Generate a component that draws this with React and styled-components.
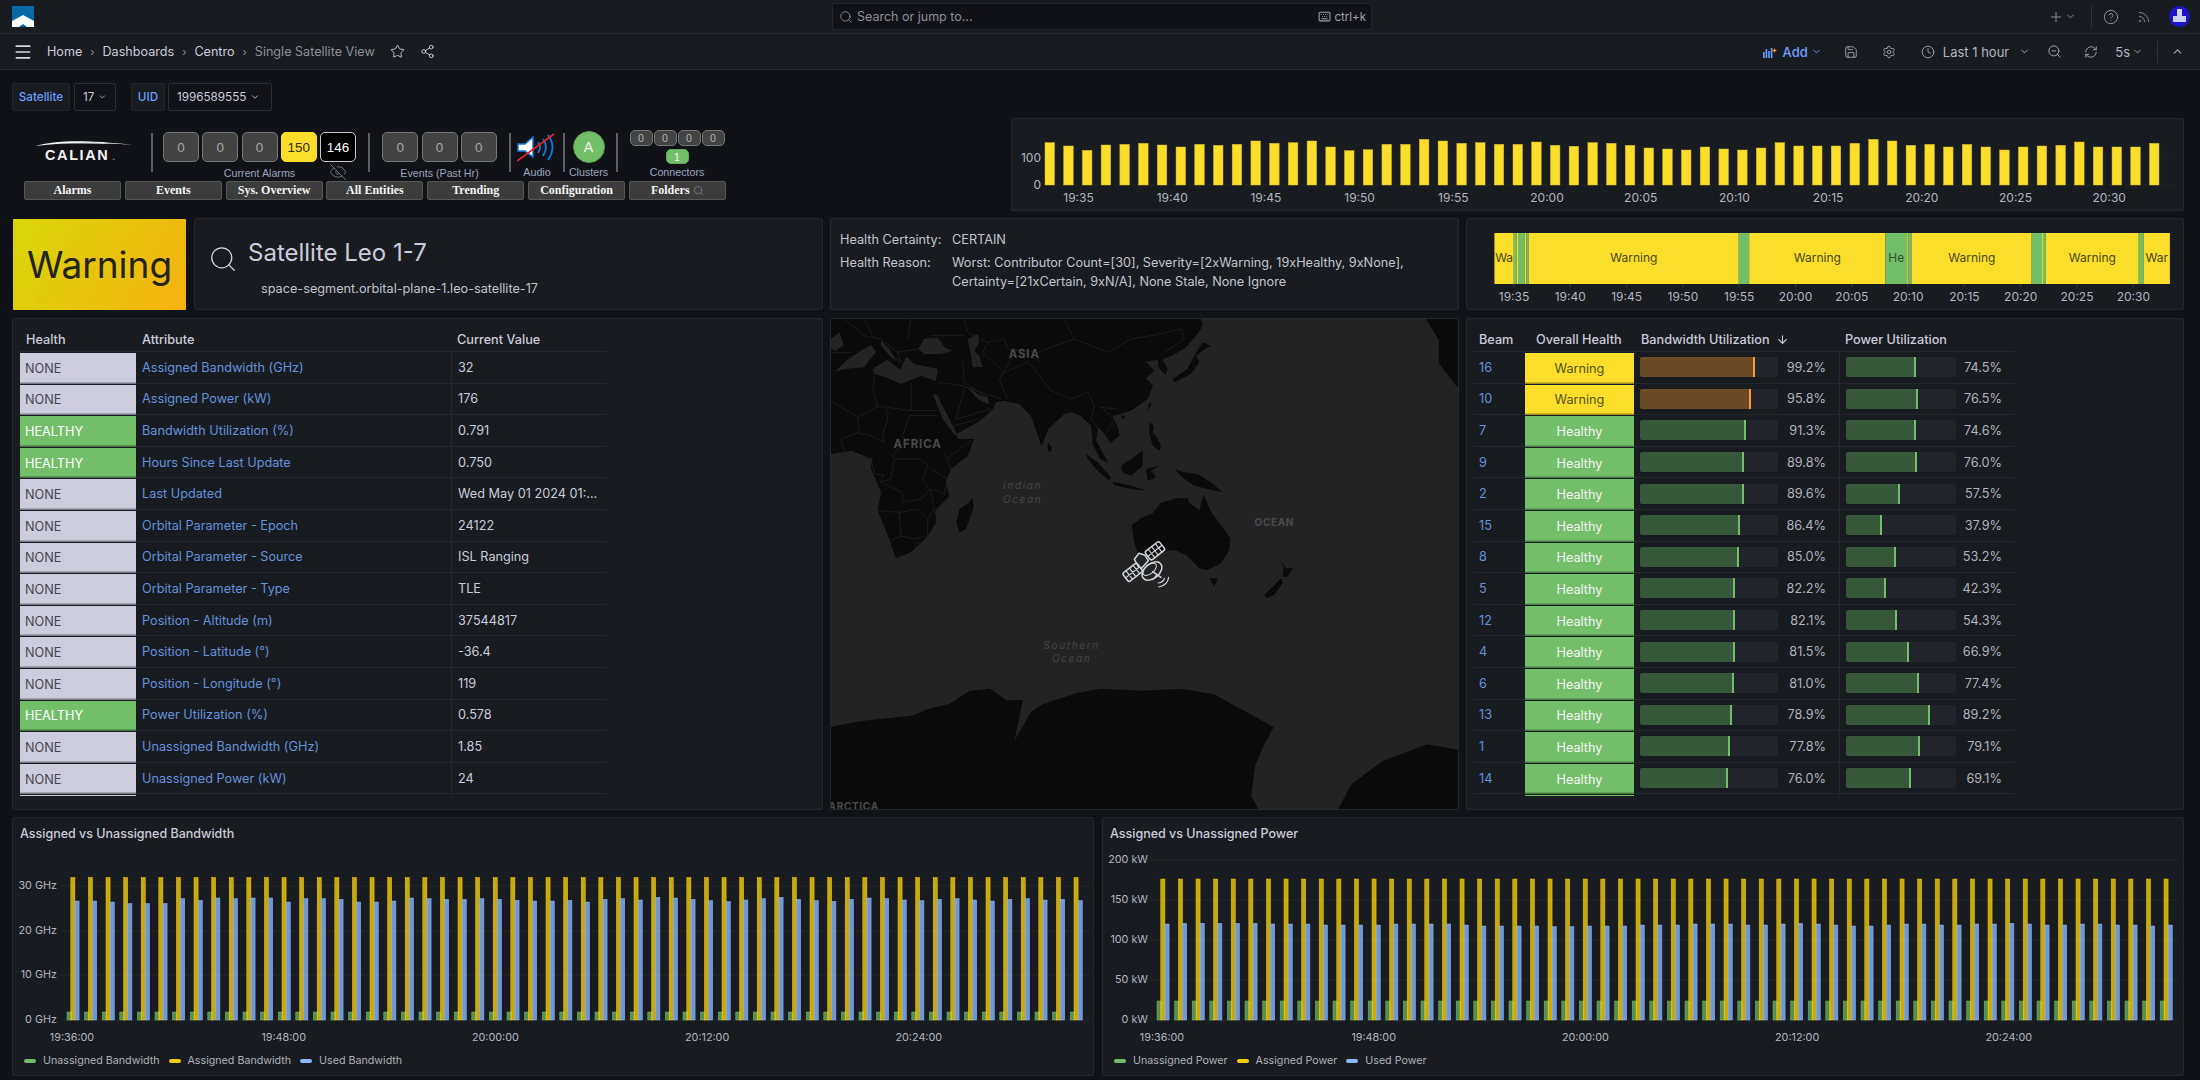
import React from 'react';
import styled, { createGlobalStyle } from 'styled-components';
import { Menu, Star, Share2, Search, Keyboard, Plus, ChevronDown, ChevronUp, CircleHelp, Rss, Save, Settings, Clock, ZoomOut, RefreshCw, EyeOff, ArrowDown } from 'lucide-react';

const Global = createGlobalStyle`
  html, body { margin: 0; padding: 0; background: #111217; }
  body { font-family: Inter, "Liberation Sans", sans-serif; color: #ccccdc; font-size: 13px; }
  * { box-sizing: border-box; }
  svg text { font-family: Inter, "Liberation Sans", sans-serif; }
`;

const Page = styled.div`width: 2200px; height: 1080px; overflow: hidden; background: #111217;`;
const TopBar = styled.header`
  height: 34px; background: #181b1f; border-bottom: 1px solid #2a2c31;
  display: grid; grid-template-columns: 832px 540px 1fr; align-items: center;
`;
const LogoSlot = styled.div`padding-left: 12px; display: flex; align-items: center;`;
const SearchBox = styled.div`
  height: 27px; background: #111217; border: 1px solid #24262b; border-radius: 2px;
  display: flex; align-items: center; padding: 0 5px 0 6px; gap: 4px; color: #8e8f99; font-size: 12.5px;
`;
const SearchText = styled.span`flex: 1;`;
const Kbd = styled.span`display: flex; align-items: center; gap: 3px; font-size: 11.5px; color: #a0a1ab;`;
const TopActions = styled.div`display: flex; align-items: center; justify-content: flex-end; padding-right: 10px; color: #8e8f99;`;
const Slot = styled.span`display: inline-flex; align-items: center; margin-left: ${p => p.$ml || 0}px; color: ${p => p.$c || 'inherit'};`;
const VSep = styled.span`width: 1px; height: ${p => p.$h || 22}px; background: #2f3136; margin-left: ${p => p.$ml || 0}px; display: inline-block;`;

const Toolbar = styled.div`
  height: 36px; background: #181b1f; border-bottom: 1px solid #2a2c31;
  display: flex; align-items: center; padding: 0 16px 0 13px; color: #a9aab5;
`;
const Crumbs = styled.nav`display: flex; align-items: center; margin-left: 14px; font-size: 12.6px; color: #ccccdc; flex: 1;`;
const Sepa = styled.span`color: #8e8f99; margin: 0 8px; display: inline-flex; font-size: 11px;`;
const Current = styled.span`color: #8e8f99;`;
const ToolTxt = styled.span`font-size: 13px; margin-left: ${p => p.$ml || 0}px; color: ${p => p.$c || '#b4b5c0'}; font-weight: ${p => p.$w || 400};`;

const Content = styled.main`padding: 13px 16px 0 12px;`;
const Vars = styled.div`display: flex; height: 28px;`;
const VarLabel = styled.div`
  height: 28px; width: ${p => p.$w}px; display: flex; align-items: center; justify-content: center; background: #181b1f; border: 1px solid #24262b; border-radius: 2px;
  color: #6e9fff; font-size: 11.7px; margin-left: ${p => p.$ml || 0}px; font-weight: 500;
`;
const VarValue = styled.div`
  height: 28px; padding: 0 8px; display: flex; align-items: center; gap: 4px; background: #111217; border: 1px solid #2a2c31; border-radius: 2px;
  color: #ccccdc; font-size: 11.7px; margin-left: ${p => p.$ml || 4}px; width: ${p => p.$w}px;
`;

const RowA = styled.section`display: flex; height: 93px; margin-top: 7px; justify-content: space-between;`;
const Widget = styled.div`width: 999px; padding-top: 12px;`;
const WidgetRow = styled.div`display: flex; align-items: flex-start; height: 49px;`;
const CalianBlock = styled.div`width: 139px; padding: 9px 0 0 23px; display: flex; flex-direction: column; color: #fff;`;
const CalianWord = styled.div`font: 700 14.5px "Liberation Sans", sans-serif; letter-spacing: 1.6px; color: #f1f1f1; padding-left: 10px; margin-top: -1px;`;
const Dot = styled.span`font-size: 9px; color: #888; margin-left: 3px;`;
const WSep = styled.div`width: 2px; height: 39px; background: #5e5f63; margin-top: 3px; margin-left: ${p => p.$ml || 0}px;`;
const Group = styled.div`display: flex; flex-direction: column; align-items: center; width: ${p => p.$w}px; margin-left: ${p => p.$ml || 0}px; margin-top: ${p => p.$mt || 0}px;`;
const Boxes = styled.div`display: flex; gap: 3.25px;`;
const AlarmBox = styled.div`
  width: 36px; height: 30px; border-radius: 5px; display: flex; align-items: center; justify-content: center;
  font: 13.4px "Liberation Sans", sans-serif;
  background: ${p => p.$v === 'y' ? '#fade2a' : p.$v === 'k' ? '#000' : '#434343'};
  color: ${p => p.$v === 'y' ? '#2b2b12' : p.$v === 'k' ? '#fff' : '#a8a8a8'};
  border: 1px solid ${p => p.$v === 'y' ? '#fade2a' : p.$v === 'k' ? '#c9c9c9' : '#767676'};
`;
const MiniBoxes = styled.div`display: flex; gap: 1px;`;
const MiniBox = styled.div`
  width: 23px; height: 16px; border-radius: 5px; background: #434343; border: 1px solid #767676; color: #b5b5b5;
  font: 10.5px "Liberation Sans", sans-serif; display: flex; align-items: center; justify-content: center;
`;
const GreenMini = styled(MiniBox)`width: 23px; height: 15px; background: #73bf69; border-color: #62a85a; color: #f3f3f3; margin-top: 3px;`;
const WLabelRow = styled.div`position: relative; width: 100%; text-align: center; line-height: 12px; height: 12px; margin-top: ${p => p.$mt ?? 4}px;`;
const WLabel = styled.span`font: 10.7px/12px "Liberation Sans", sans-serif; color: #9da6bd; white-space: nowrap;`;
const EyeSlot = styled.span`position: absolute; right: 9px; top: -3px; color: #8d8d8d; display: flex;`;
const Circle = styled.div`
  width: 32px; height: 32px; border-radius: 50%; background: #73bf69; color: #f5f5f5; border: 1px solid #5f9a58;
  display: flex; align-items: center; justify-content: center; font: 14px "Liberation Sans", sans-serif;
`;
const NavRow = styled.div`display: flex; padding-left: 12px; gap: 3.8px; margin-top: 2px;`;
const NavBtn = styled.button`
  width: 97px; height: 19px; background: #3c3c3c; border: 1px solid #565656; border-radius: 2px; padding: 0; color: #f4f4f4;
  font: 700 12px "Liberation Serif", serif; display: flex; align-items: center; justify-content: center; gap: 3px;
`;

const Panel = styled.div`background: #181b1f; border: 1px solid #25272c; border-radius: 2px; overflow: hidden; min-width: 0; position: relative;`;
const ChartA = styled(Panel)`width: 1173px; height: 93px;`;
const Svg = styled.svg`display: block;`;

const Main = styled.section`
  display: grid; grid-template-columns: 811px 629px 718px; grid-template-rows: 92px 492px; column-gap: 7px; row-gap: 8px; margin-top: 7px;
`;
const StatusCell = styled.div`display: flex; gap: 8px;`;
const WarnBox = styled.div`
  width: 173px; height: 91px; margin: 1px 0 0 1px; border-radius: 1px; background: linear-gradient(120deg, #d9d60a, #f6b20f);
  color: #23231c; font-size: 37px; display: flex; align-items: center; justify-content: center; font-weight: 400;
`;
const NamePanel = styled(Panel)`flex: 1; display: flex; padding: 25px 0 0 13px; gap: 10px;`;
const Lens = styled.div`color: #d6d7e0; height: 30px;`;
const NameCol = styled.div`display: flex; flex-direction: column;`;
const SatName = styled.div`font-size: 24px; line-height: 29px; color: #ccccdc; margin-top: -6px;`;
const SatSub = styled.div`font-size: 12.7px; line-height: 16px; color: #c2c3ce; margin: 14px 0 0 13px;`;
const HealthPanel = styled(Panel)`padding: 11px 9px; display: grid; grid-template-columns: 112px 1fr; grid-auto-rows: min-content; font-size: 12.7px; line-height: 19.4px; row-gap: 3.6px; color: #c4c5d0;`;
const HealthKey = styled.span`color: #c4c5d0;`;
const HealthVal = styled.span`color: #c4c5d0;`;

const TablePanel = styled(Panel)`padding: 8px 7px 0;`;
const TableClip = styled.div`height: 469px; overflow: hidden; width: ${p => p.$w}px;`;
const THead = styled.div`display: grid; grid-template-columns: ${p => p.$cols}; height: 25px; border-bottom: 1px solid #25272c; align-items: center; font-weight: 500; font-size: 12.7px; color: #ccccdc;`;
const Th = styled.div`padding-left: ${p => p.$pl ?? 6}px; display: flex; align-items: center; gap: 6px; white-space: nowrap;`;
const TRow = styled.div`display: grid; grid-template-columns: ${p => p.$cols}; height: 31.6px; border-bottom: 1px solid #25272c; font-size: 12.7px; color: #ccccdc; align-items: stretch;`;
const Td = styled.div`display: flex; align-items: center; padding-left: ${p => p.$pl ?? 6}px; white-space: nowrap; overflow: hidden; border-left: ${p => p.$bl ? '1px solid #25272c' : 'none'}; min-width: 0;`;
const HealthTd = styled(Td)`
  background: ${p => p.$s === 'HEALTHY' ? '#73bf69' : '#ccccdc'}; color: ${p => p.$s === 'HEALTHY' ? '#fff' : '#47474d'};
  margin-top: 1px; margin-bottom: -1px; box-shadow: inset 0 -1.5px 0 rgba(0, 0, 0, .4);
`;
const LinkTd = styled(Td)`color: #6592dd;`;
const StateTd = styled.div`
  display: flex; align-items: center; justify-content: center; margin-top: 1px; margin-bottom: -1px; box-shadow: inset 0 -1.5px 0 rgba(0, 0, 0, .35);
  background: ${p => p.$s === 'Warning' ? '#fade2a' : '#73bf69'}; color: ${p => p.$s === 'Warning' ? '#55521c' : '#f5f5f5'};
`;
const GaugeTd = styled(Td)`padding-left: 6px; gap: 0; position: relative;`;
const Track = styled.div`height: 20px; width: ${p => p.$w}px; background: #21242a; border-radius: 2px; overflow: hidden; flex: none;`;
const Fill = styled.div`height: 100%; background: ${p => p.$warn ? '#6b4a26' : '#37573a'}; border-right: 2px solid ${p => p.$warn ? '#ff9830' : '#73bf69'};`;
const Pct = styled.span`width: ${p => p.$w}px; text-align: right; color: #b2b3be; flex: none;`;

const MapPanel = styled(Panel)`background: #232323;`;
const Bottom = styled.section`display: grid; grid-template-columns: 1082px 1082px; column-gap: 8px; margin-top: 7px;`;
const ChartPanel = styled(Panel)`height: 259px; display: flex; flex-direction: column;`;
const ChartTitle = styled.div`font-size: 12.5px; font-weight: 500; color: #ccccdc; padding: 8px 0 0 7px; height: 32px; line-height: 16px;`;
const Legend = styled.div`display: flex; padding-left: 11px; font-size: 10.7px; color: #b0b1bb; margin-top: 6px;`;
const LegendItem = styled.div`display: flex; align-items: center; gap: 7px; margin-right: 9px;`;
const Swatch = styled.span`width: 12px; height: 4px; border-radius: 2px; background: ${p => p.$c};`;

const Logo = () => (
  <svg width="22" height="21" viewBox="0 0 22 21">
    <rect width="22" height="21" fill="#066aa9" />
    <path d="M0 15L11 9l11 6v6h-7l-4-3-4 3H0z" fill="#fff" />
  </svg>
);
const AddIcon = () => (
  <svg width="14" height="14" viewBox="0 0 14 14" fill="#6e9fff">
    <rect x="0" y="7" width="1.6" height="6" /><rect x="2.6" y="4" width="1.6" height="9" /><rect x="5.2" y="6" width="1.6" height="7" /><rect x="7.8" y="3" width="1.6" height="10" />
    <path d="M11.5 3l.8 1.8 1.7.7-1.7.8-.8 1.7-.8-1.7-1.7-.8 1.7-.7z" fill="#ff9830" />
  </svg>
);
const Avatar = () => (
  <svg width="21" height="21" viewBox="0 0 21 21">
    <circle cx="10.5" cy="10.5" r="10.5" fill="#1c14c8" />
    <rect x="8" y="3" width="5" height="7" fill="#cfd0f5" /><rect x="4" y="10" width="13" height="6" fill="#cfd0f5" />
  </svg>
);
const Swoosh = () => (
  <svg width="98" height="9" viewBox="0 0 98 9">
    <path d="M0 7C20 2 45 0 98 6 60 3.2 30 3.4 0 7z" fill="#fff" />
    <path d="M20 4L60 3 78 5 50 4.4z" fill="#ddd" />
  </svg>
);
const Speaker = () => (
  <svg width="40" height="30" viewBox="0 0 40 30" fill="none">
    <path d="M1 11h7l8-7v20l-8-6H1z" fill="#fff" stroke="#0b7be0" strokeWidth="1.4" />
    <path d="M21 9q4 5 0 11M26 6q6 8 0 17M31 2q9 12 0 25" stroke="#0b7be0" strokeWidth="1.8" />
    <path d="M0 28L37 1" stroke="#e5232a" strokeWidth="1.6" />
  </svg>
);

const segs = [
  ['y', 73, 114, 'Wa'], ['g', 114, 120], ['y', 120, 123], ['g', 123, 137], ['y', 137, 141], ['g', 141, 146], ['y', 146, 591, 'Warning'],
  ['g', 591, 613], ['y', 613, 902, 'Warning'], ['g', 902, 948, 'He'], ['y', 948, 951], ['g', 951, 958], ['y', 958, 1212, 'Warning'],
  ['g', 1212, 1234], ['y', 1234, 1236], ['g', 1236, 1242], ['y', 1242, 1439, 'Warning'], ['g', 1439, 1449], ['y', 1449, 1505, 'War'],
];
const tlTicks = ['19:35', '19:40', '19:45', '19:50', '19:55', '20:00', '20:05', '20:10', '20:15', '20:20', '20:25', '20:30'];
const Timeline = () => (
  <svg width="716" height="90" style={{ display: 'block' }}>
    {segs.map(([c, a, b, t], i) => {
      const x = (a / 2.12) + 1460 - 1467, w = (b - a) / 2.12;
      return (
        <g key={i}>
          <rect x={x} y={14} width={w} height={51} fill={c === 'y' ? '#fade2a' : '#73bf69'} />
          {t && <text x={x + w / 2} y={40} fontSize="12" textAnchor="middle" dominantBaseline="middle" fill={c === 'y' ? '#4a4718' : '#2f4f2b'}>{t}</text>}
        </g>
      );
    })}
    {tlTicks.map((t, i) => (
      <g key={t}>
        <line x1={47 + i * 56.3} x2={47 + i * 56.3} y1={65} y2={68} stroke="#3a3c42" />
        <text x={47 + i * 56.3} y={79} fontSize="12" textAnchor="middle" dominantBaseline="middle" fill="#b4b5c0">{t}</text>
      </g>
    ))}
  </svg>
);

const topA = [428,438,451,435,433,430,435,441,433,436,433,423,430,428,423,441,452,449,433,433,418,423,430,428,433,433,426,436,439,428,430,436,444,447,450,441,447,450,444,428,438,438,438,430,418,423,436,433,441,433,441,450,441,438,436,426,441,441,441,430];
const aTicks = ['19:35', '19:40', '19:45', '19:50', '19:55', '20:00', '20:05', '20:10', '20:15', '20:20', '20:25', '20:30'];
const TopChart = () => (
  <Svg width="1171" height="91">
    <line x1="33" x2="1165" y1="39" y2="39" stroke="#202226" />
    <line x1="33" x2="1165" y1="66" y2="66" stroke="#202226" />
    <text x="29" y="40" fontSize="12" textAnchor="end" dominantBaseline="middle" fill="#b4b5c0">100</text>
    <text x="29" y="67" fontSize="12" textAnchor="end" dominantBaseline="middle" fill="#b4b5c0">0</text>
    {topA.map((z, i) => {
      const h = (555 - z) / 3;
      return <rect key={i} x={33 + i * 18.72} y={66 - h} width="9.5" height={h} fill="#fade2a" stroke="#d4bc2c" strokeWidth="0.5" />;
    })}
    {aTicks.map((t, i) => <text key={t} x={66.5 + i * 93.7} y={80} fontSize="12" textAnchor="middle" dominantBaseline="middle" fill="#b4b5c0">{t}</text>)}
  </Svg>
);

const usedBW = [273,273,276,281,281,281,266,271,264,266,264,264,276,266,266,268,276,276,273,264,266,268,268,266,268,271,273,273,271,276,268,266,270,262,264,268,272,275,270,266,262,268,272,274,268,264,266,270,272,268,266,270,273,268,266,270,268,272];
const usedP = [342,340,340,340,340,340,342,342,342,345,345,345,345,342,342,342,342,345,348,348,348,348,350,350,348,348,348,345,345,345,342,342,342,345,345,342,340,342,345,348,348,345,342,342,345,345,342,342,340,342,345,345,342,342,345,345,348,345];

const BarChart = ({ yLabels, x0, labelX, assigned, unassigned, used, tickOff }) => (
  <Svg width="1080" height="198">
    {yLabels.map(([t, y]) => (
      <g key={t}>
        <line x1={labelX + 4} x2="1076" y1={y} y2={y} stroke="#25272b" />
        <text x={labelX} y={y} fontSize="10.8" textAnchor="end" dominantBaseline="middle" fill="#b4b5c0">{t}</text>
      </g>
    ))}
    {used.map((u, i) => {
      const gx = x0 + i * 17.6, base = 170;
      return (
        <g key={i}>
          <rect x={gx} y={base - unassigned} width="4.4" height={unassigned} fill="#73bf69" fillOpacity="0.7" stroke="#73bf69" strokeWidth="0.5" />
          <rect x={gx + 3.8} y={base - assigned} width="4.1" height={assigned} fill="#f2cc0c" fillOpacity="0.8" stroke="#f2cc0c" strokeWidth="0.5" />
          <rect x={gx + 8} y={base - u} width="4.1" height={u} fill="#8ab8ff" fillOpacity="0.8" stroke="#8ab8ff" strokeWidth="0.5" />
        </g>
      );
    })}
    {['19:36:00', '19:48:00', '20:00:00', '20:12:00', '20:24:00'].map((t, i) => (
      <text key={t} x={tickOff + i * 211.7} y={188} fontSize="10.8" textAnchor="middle" dominantBaseline="middle" fill="#b4b5c0">{t}</text>
    ))}
  </Svg>
);

const LAND = '#0a0a0a';
const SEA = '#232323';
const WorldMap = () => (
  <Svg width="628" height="490" viewBox="0 0 1884 1470">
    <path fill={LAND} d="M0 0L1110 0 1115 20 1100 45 1062 88 1022 110 995 122 1010 150 1004 168 985 150 980 122 945 128 970 155 945 178 966 200 950 240 905 272 870 285 845 290 862 330 866 350 838 372 820 345 802 325 795 365 815 400 832 432 808 420 785 375 780 320 750 292 722 280 700 285 652 330 632 382 600 292 590 282 565 255 520 245 495 250 488 268 468 288 440 310 375 346 382 360 430 360 410 410 360 450 345 490 355 532 312 575 316 610 290 652 240 700 195 718 175 660 140 575 150 520 120 450 122 420 60 395 0 405z" />
    <g fill={SEA}>
      <path d="M0 60L25 40 38 78 15 95 0 90z" />
      <path d="M12 158L45 125 90 95 120 78 135 100 110 130 100 145 40 150z" />
      <path d="M128 148L168 122 190 138 208 152 226 112 250 135 320 150 315 186 270 170 210 195 165 175 130 165z" />
      <path d="M150 65L175 90 195 125 180 115 150 80z" />
      <path d="M262 90L280 60 320 55 340 85 365 95 330 105 280 105z" />
      <path d="M410 60L440 45 445 70 430 95 445 110 455 145 425 145 420 110z" />
      <path d="M305 225L320 230 350 290 378 345 370 347 335 300z" />
      <path d="M410 205L440 225 470 235 475 255 460 250 440 240z" />
    </g>
    <path fill="none" stroke="#292929" strokeWidth="1.8" strokeLinejoin="round" d="M125 150L130 190 125 215 140 262 80 295 0 245M240 190L240 275 170 265 140 262M240 275L320 275M165 268L170 300 155 345 160 370M235 290L215 350 225 365 185 410 195 420M80 295L85 340 30 360 40 400M160 370L110 345 85 345M120 415L130 465 160 470 145 490 180 480 190 420 270 420 290 440 275 480 300 520M150 490L215 520 215 550 270 540 300 510 340 525 350 480 300 450M140 575L205 580 210 650 180 665M205 580L260 570 290 600 290 650 250 660 205 650M290 600L310 570 300 520M340 400L360 450M345 420L420 365M235 290L320 290M320 190L395 200 420 210M395 130L400 190 470 235M505 180L530 240M505 180L520 160 590 130 610 150 640 190 660 215 720 240 770 220 790 260M590 130L560 90 630 130M520 160L455 100 470 70 520 60 530 90 620 100 700 70 730 60 830 100 900 60 960 50 1050 30 1060 60 1000 100M400 0L410 40 470 70M700 0L730 60M790 260L780 300 820 350 850 300 810 265 860 270M560 90L510 170M420 210L510 240M40 0L100 50 150 60 200 100 260 90 300 50 400 50M100 0L130 60M0 100L60 100M240 0L230 60M200 100L210 130 170 100M400 210L375 300 480 270M370 320L440 300M260 670a8 8 0 1 0 .1 0" />
    <g fill={LAND}>
      <path d="M425 535L428 565 405 630 385 640 376 610 385 570 415 550z" />
      <path d="M650 370L662 385 660 398 650 395z" />
      <path d="M765 405L800 430 840 475 835 485 800 455 770 420z" />
      <path d="M870 440L900 420 935 395 935 440 900 470 875 460z" />
      <path d="M845 488L900 500 950 515 900 510 850 498z" />
      <path d="M945 450L985 440 960 455 975 475 950 485z" />
      <path d="M955 310L968 320 965 340 975 350 990 380 985 395 965 380 955 345z" />
      <path d="M1030 450L1060 460 1100 465 1140 490 1175 520 1130 510 1090 500 1060 480z" />
      <path d="M955 250L962 255 950 275z" />
      <path d="M870 288L882 292 874 302z" />
      <path d="M1130 85L1095 110 1105 130 1080 165 1030 190 1025 180 1070 150 1090 110 1115 70 1140 80z" />
      <g transform="translate(690 453)">
        <path d="M212 165L240 145 275 130 300 98 345 85 380 85 385 100 415 120 428 75 450 125 480 165 508 205 505 240 480 280 440 300 415 295 385 265 375 255 340 240 300 245 260 265 230 250 220 220z" />
        <path d="M445 325L470 325 460 350z" />
        <path d="M610 375L640 345 660 325 665 340 640 375 615 385z" />
        <path d="M655 270L675 295 695 295 680 320 665 320 668 290z" />
      </g>
      <g transform="translate(0 -327) scale(1.224 1.149)">
        <path d="M0 1350L70 1335 200 1320 245 1300 290 1290 340 1255 390 1250 430 1280 470 1280 450 1385 490 1310 520 1290 600 1262 660 1250 760 1255 860 1250 940 1265 1000 1300 1085 1350 1060 1400 1040 1450 1030 1530 1050 1570 0 1570z" />
        <path d="M1275 1500L1350 1440 1460 1395 1540 1410 1540 1570 1240 1570z" />
        <path d="M1458 284L1490 340 1490 400 1540 470 1540 284z" />
      </g>
    </g>
    <g fontFamily="Lato" fontWeight="700" fill="#4a4a4a" textAnchor="middle">
      <text x="580" y="117" fontSize="34" letterSpacing="3">ASIA</text>
      <text x="260" y="388" fontSize="34" letterSpacing="3">AFRICA</text>
      <text x="1330" y="620" fontSize="30" letterSpacing="2">OCEAN</text>
      <text x="68" y="1473" fontSize="30" letterSpacing="2">ARCTICA</text>
    </g>
    <g fontFamily="Lato" fontStyle="italic" fill="#454545" textAnchor="middle" fontSize="30" letterSpacing="5">
      <text x="575" y="511">Indian</text>
      <text x="575" y="551">Ocean</text>
      <text x="722" y="990">Southern</text>
      <text x="722" y="1030">Ocean</text>
    </g>
    <g transform="translate(690 453)" fill="none" stroke="#d5d6de" strokeWidth="4.5" strokeLinecap="round" strokeLinejoin="round">
      <g transform="rotate(-38 281 243)">
        <rect x="255" y="227" width="54" height="32" rx="6" />
        <path d="M269 227v32M282 227v32M296 227v32M255 243h54" strokeWidth="3.5" />
      </g>
      <g transform="rotate(-38 215 307)">
        <rect x="188" y="291" width="54" height="32" rx="6" />
        <path d="M202 291v32M215 291v32M229 291v32M188 307h54" strokeWidth="3.5" />
      </g>
      <path d="M233 291L220 268 234 250 252 256 262 272 240 296" />
      <ellipse cx="273" cy="303" rx="34" ry="22" transform="rotate(-40 273 303)" />
      <ellipse cx="266" cy="298" rx="24" ry="13" transform="rotate(-40 266 298)" strokeWidth="3" />
      <path d="M275 305L300 322M288 314l-6 8" />
      <path d="M293 351Q320 346 323 322M292 339Q307 337 310 325" strokeWidth="3.5" />
    </g>
  </Svg>
);

const attrs = [
  ['NONE', 'Assigned Bandwidth (GHz)', '32'], ['NONE', 'Assigned Power (kW)', '176'], ['HEALTHY', 'Bandwidth Utilization (%)', '0.791'],
  ['HEALTHY', 'Hours Since Last Update', '0.750'], ['NONE', 'Last Updated', 'Wed May 01 2024 01:...'], ['NONE', 'Orbital Parameter - Epoch', '24122'],
  ['NONE', 'Orbital Parameter - Source', 'ISL Ranging'], ['NONE', 'Orbital Parameter - Type', 'TLE'], ['NONE', 'Position - Altitude (m)', '37544817'],
  ['NONE', 'Position - Latitude (°)', '-36.4'], ['NONE', 'Position - Longitude (°)', '119'], ['HEALTHY', 'Power Utilization (%)', '0.578'],
  ['NONE', 'Unassigned Bandwidth (GHz)', '1.85'], ['NONE', 'Unassigned Power (kW)', '24'], ['NONE', '', ''],
];
const beams = [
  [16, 'Warning', 99.2, 74.5], [10, 'Warning', 95.8, 76.5], [7, 'Healthy', 91.3, 74.6], [9, 'Healthy', 89.8, 76.0], [2, 'Healthy', 89.6, 57.5],
  [15, 'Healthy', 86.4, 37.9], [8, 'Healthy', 85.0, 53.2], [5, 'Healthy', 82.2, 42.3], [12, 'Healthy', 82.1, 54.3], [4, 'Healthy', 81.5, 66.9],
  [6, 'Healthy', 81.0, 77.4], [13, 'Healthy', 78.9, 89.2], [1, 'Healthy', 77.8, 79.1], [14, 'Healthy', 76.0, 69.1], ['', 'Healthy', null, null],
];
const attrCols = '116px 315px 155px';
const beamCols = '51px 109px 205px 176px';

const Gauge = ({ v, warn, w, k, pw }) => (
  <>
    <Track $w={w}><Fill $warn={warn} style={{ width: v * k + 'px' }} /></Track>
    <Pct $w={pw}>{v.toFixed(1)}%</Pct>
  </>
);

export default function App() {
  return (
    <Page>
      <Global />
      <TopBar>
        <LogoSlot><Logo /></LogoSlot>
        <SearchBox>
          <Search size={14} strokeWidth={1.5} />
          <SearchText>Search or jump to...</SearchText>
          <Kbd><Keyboard size={13} />ctrl+k</Kbd>
        </SearchBox>
        <TopActions>
          <Plus size={16} strokeWidth={1.5} />
          <Slot $ml={1}><ChevronDown size={11} /></Slot>
          <VSep $ml={15} />
          <Slot $ml={11}><CircleHelp size={16} strokeWidth={1.5} /></Slot>
          <Slot $ml={18}><Rss size={14} strokeWidth={1.5} /></Slot>
          <Slot $ml={18}><Avatar /></Slot>
        </TopActions>
      </TopBar>
      <Toolbar>
        <Menu size={20} color="#d8d9e0" />
        <Crumbs>
          <span>Home</span><Sepa>›</Sepa><span>Dashboards</span><Sepa>›</Sepa><span>Centro</span><Sepa>›</Sepa><Current>Single Satellite View</Current>
          <Slot $ml={15} $c="#d8d9e0"><Star size={15} strokeWidth={1.4} /></Slot>
          <Slot $ml={15} $c="#d8d9e0"><Share2 size={15} strokeWidth={1.4} /></Slot>
        </Crumbs>
        <AddIcon />
        <ToolTxt $ml={6} $c="#6e9fff" $w={500}>Add</ToolTxt>
        <Slot $ml={3} $c="#6e9fff"><ChevronDown size={11} /></Slot>
        <Slot $ml={22}><Save size={14} strokeWidth={1.5} /></Slot>
        <Slot $ml={24}><Settings size={14} strokeWidth={1.5} /></Slot>
        <Slot $ml={25}><Clock size={14} strokeWidth={1.5} /></Slot>
        <ToolTxt $ml={8}>Last 1 hour</ToolTxt>
        <Slot $ml={10}><ChevronDown size={11} /></Slot>
        <Slot $ml={17}><ZoomOut size={15} strokeWidth={1.5} /></Slot>
        <Slot $ml={22}><RefreshCw size={14} strokeWidth={1.5} /></Slot>
        <ToolTxt $ml={17}>5s</ToolTxt>
        <Slot $ml={2}><ChevronDown size={11} /></Slot>
        <VSep $h={22} $ml={14} />
        <Slot $ml={13}><ChevronUp size={13} /></Slot>
      </Toolbar>
      <Content>
        <Vars>
          <VarLabel $w={58}>Satellite</VarLabel>
          <VarValue $w={42}>17<ChevronDown size={10} /></VarValue>
          <VarLabel $w={34} $ml={15}>UID</VarLabel>
          <VarValue $w={104} $ml={3}>1996589555<ChevronDown size={10} /></VarValue>
        </Vars>
        <RowA>
          <Widget>
            <WidgetRow>
              <CalianBlock><Swoosh /><CalianWord>CALIAN<Dot>.</Dot></CalianWord></CalianBlock>
              <WSep />
              <Group $w={193} $ml={10} $mt={2}>
                <Boxes>
                  <AlarmBox>0</AlarmBox><AlarmBox>0</AlarmBox><AlarmBox>0</AlarmBox><AlarmBox $v="y">150</AlarmBox><AlarmBox $v="k">146</AlarmBox>
                </Boxes>
                <WLabelRow><WLabel>Current Alarms</WLabel><EyeSlot><EyeOff size={18} strokeWidth={1} /></EyeSlot></WLabelRow>
              </Group>
              <WSep $ml={12} />
              <Group $w={115} $ml={12} $mt={2}>
                <Boxes><AlarmBox>0</AlarmBox><AlarmBox>0</AlarmBox><AlarmBox>0</AlarmBox></Boxes>
                <WLabelRow><WLabel>Events (Past Hr)</WLabel></WLabelRow>
              </Group>
              <WSep $ml={12} />
              <Group $w={40} $ml={6} $mt={3}>
                <Speaker />
                <WLabelRow $mt={2}><WLabel>Audio</WLabel></WLabelRow>
              </Group>
              <WSep $ml={6} />
              <Group $w={47} $ml={0} $mt={1}>
                <Circle>A</Circle>
                <WLabelRow $mt={2}><WLabel>Clusters</WLabel></WLabelRow>
              </Group>
              <WSep $ml={4} />
              <Group $w={118}>
                <MiniBoxes><MiniBox>0</MiniBox><MiniBox>0</MiniBox><MiniBox>0</MiniBox><MiniBox>0</MiniBox></MiniBoxes>
                <GreenMini>1</GreenMini>
                <WLabelRow $mt={1}><WLabel>Connectors</WLabel></WLabelRow>
              </Group>
            </WidgetRow>
            <NavRow>
              {['Alarms', 'Events', 'Sys. Overview', 'All Entities', 'Trending', 'Configuration'].map(t => <NavBtn key={t}>{t}</NavBtn>)}
              <NavBtn>Folders <Search size={11} color="#9a9a9a" strokeWidth={1.2} /></NavBtn>
            </NavRow>
          </Widget>
          <ChartA><TopChart /></ChartA>
        </RowA>
        <Main>
          <StatusCell>
            <WarnBox>Warning</WarnBox>
            <NamePanel>
              <Lens><Search size={30} strokeWidth={1} /></Lens>
              <NameCol>
                <SatName>Satellite Leo 1-7</SatName>
                <SatSub>space-segment.orbital-plane-1.leo-satellite-17</SatSub>
              </NameCol>
            </NamePanel>
          </StatusCell>
          <HealthPanel>
            <HealthKey>Health Certainty:</HealthKey><HealthVal>CERTAIN</HealthVal>
            <HealthKey>Health Reason:</HealthKey>
            <HealthVal>Worst: Contributor Count=[30], Severity=[2xWarning, 19xHealthy, 9xNone],<br />Certainty=[21xCertain, 9xN/A], None Stale, None Ignore</HealthVal>
          </HealthPanel>
          <Panel><Timeline /></Panel>

          <TablePanel>
            <TableClip $w={586}>
              <THead $cols={attrCols}><Th>Health</Th><Th>Attribute</Th><Th>Current Value</Th></THead>
              {attrs.map(([h, a, v], i) => (
                <TRow key={i} $cols={attrCols}>
                  <HealthTd $s={h} $pl={5}>{a ? h : ''}</HealthTd>
                  <LinkTd>{a}</LinkTd>
                  <Td $bl>{v}</Td>
                </TRow>
              ))}
            </TableClip>
          </TablePanel>
          <MapPanel><WorldMap /></MapPanel>
          <TablePanel>
            <TableClip $w={541}>
              <THead $cols={beamCols}>
                <Th $pl={5}>Beam</Th><Th $pl={11}>Overall Health</Th><Th $pl={7}>Bandwidth Utilization <ArrowDown size={13} /></Th><Th>Power Utilization</Th>
              </THead>
              {beams.map(([b, s, bw, p], i) => (
                <TRow key={i} $cols={beamCols}>
                  <LinkTd $pl={5}>{b}</LinkTd>
                  <StateTd $s={s}>{bw !== null ? s : ''}</StateTd>
                  <GaugeTd>{bw !== null && <Gauge v={bw} warn={s === 'Warning'} w={138} k={1.16} pw={48} />}</GaugeTd>
                  <GaugeTd $bl>{p !== null && <Gauge v={p} w={110} k={0.937} pw={46} />}</GaugeTd>
                </TRow>
              ))}
            </TableClip>
          </TablePanel>
        </Main>
        <Bottom>
          <ChartPanel>
            <ChartTitle>Assigned vs Unassigned Bandwidth</ChartTitle>
            <BarChart x0={54} labelX={44} assigned={142.5} unassigned={8} tickOff={59}
              yLabels={[['30 GHz', 36], ['20 GHz', 81], ['10 GHz', 125], ['0 GHz', 170]]}
              used={usedBW.map(z => (630 - z) / 3)} />
            <Legend>
              <LegendItem><Swatch $c="#73bf69" />Unassigned Bandwidth</LegendItem>
              <LegendItem><Swatch $c="#f2cc0c" />Assigned Bandwidth</LegendItem>
              <LegendItem><Swatch $c="#8ab8ff" />Used Bandwidth</LegendItem>
            </Legend>
          </ChartPanel>
          <ChartPanel>
            <ChartTitle>Assigned vs Unassigned Power</ChartTitle>
            <BarChart x0={54} labelX={45} assigned={141} unassigned={19} tickOff={59}
              yLabels={[['200 kW', 10], ['150 kW', 50], ['100 kW', 90], ['50 kW', 130], ['0 kW', 170]]}
              used={usedP.map(z => (630 - z) / 3)} />
            <Legend>
              <LegendItem><Swatch $c="#73bf69" />Unassigned Power</LegendItem>
              <LegendItem><Swatch $c="#f2cc0c" />Assigned Power</LegendItem>
              <LegendItem><Swatch $c="#8ab8ff" />Used Power</LegendItem>
            </Legend>
          </ChartPanel>
        </Bottom>
      </Content>
    </Page>
  );
}
